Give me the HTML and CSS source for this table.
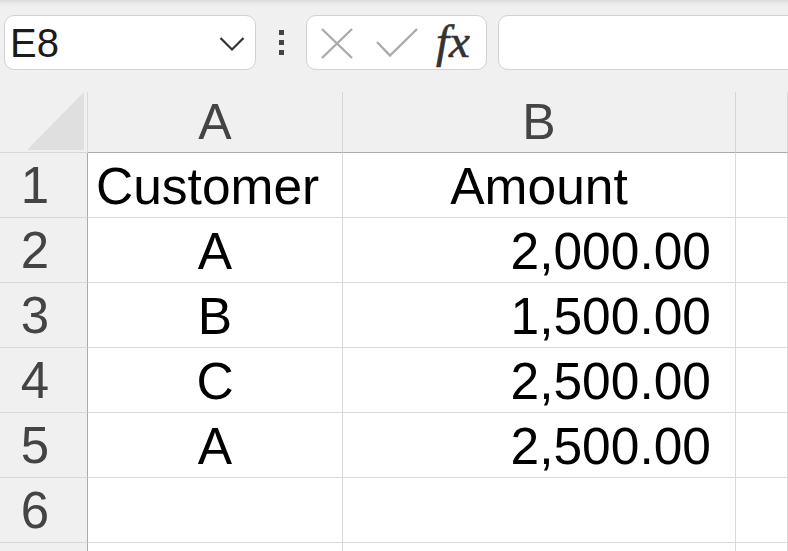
FILE: index.html
```html
<!DOCTYPE html>
<html>
<head>
<meta charset="utf-8">
<link rel="stylesheet" href="styles.css">
</head>
<body>
<div class="app">
  <div class="toolbar">
    <div class="namebox">
      <span class="cellref">E8</span>
      <svg class="chev" width="26" height="16" viewBox="0 0 26 16"><polyline points="1.5,2 13,13.5 24.5,2" fill="none" stroke="#333" stroke-width="2.2"/></svg>
    </div>
    <div class="dots"><span></span><span></span><span></span></div>
    <div class="fxbox">
      <svg class="ico-x" width="32" height="31" viewBox="0 0 32 31"><path d="M1 1 L31 30 M31 1 L1 30" stroke="#ababab" stroke-width="2.4" fill="none"/></svg>
      <svg class="ico-check" width="42" height="30" viewBox="0 0 42 30"><polyline points="1,14 14,27.5 41,1" fill="none" stroke="#ababab" stroke-width="2.4"/></svg>
      <span class="fx">fx</span>
    </div>
    <div class="formula"></div>
  </div>
  <div class="grid">
    <div class="corner"><svg width="57" height="58" viewBox="0 0 57 58"><polygon points="0,58 57,58 57,0" fill="#dfdfdf"/></svg></div>
    <div class="colhead">A</div>
    <div class="colhead">B</div>
    <div class="colhead"></div>

    <div class="rowhead">1</div>
    <div class="cell left">Customer</div>
    <div class="cell center">Amount</div>
    <div class="cell"></div>

    <div class="rowhead">2</div>
    <div class="cell center">A</div>
    <div class="cell num">2,000.00</div>
    <div class="cell"></div>

    <div class="rowhead">3</div>
    <div class="cell center">B</div>
    <div class="cell num">1,500.00</div>
    <div class="cell"></div>

    <div class="rowhead">4</div>
    <div class="cell center">C</div>
    <div class="cell num">2,500.00</div>
    <div class="cell"></div>

    <div class="rowhead">5</div>
    <div class="cell center">A</div>
    <div class="cell num">2,500.00</div>
    <div class="cell"></div>

    <div class="rowhead">6</div>
    <div class="cell"></div>
    <div class="cell"></div>
    <div class="cell"></div>

    <div class="rowhead"></div>
    <div class="cell"></div>
    <div class="cell"></div>
    <div class="cell"></div>
  </div>
</div>
</body>
</html>
```
FILE: styles.css
```css
* { box-sizing: border-box; }
html, body { margin: 0; padding: 0; }
body {
  background: #f0f0f0;
  width: 788px;
  height: 551px;
  overflow: hidden;
  font-family: "Liberation Sans", Arial, sans-serif;
}
.app { width: 788px; height: 551px; overflow: hidden; }

.toolbar {
  height: 92px;
  padding: 15px 0 22px 4px;
  display: flex;
  align-items: stretch;
  background: linear-gradient(#dcdcdc 0px, #ececec 4px, #f0f0f0 8px);
}
.namebox {
  width: 252px;
  height: 55px;
  background: #fff;
  border: 1px solid #d2d2d2;
  border-radius: 10px;
  display: flex;
  align-items: center;
  justify-content: space-between;
  padding: 0 10px 0 5px;
}
.cellref {
  font-size: 40px;
  color: #1b1b1b;
  line-height: 1;
  padding-top: 1px;
}
.chev { display: block; margin-top: 2px; }
.dots {
  width: 50px;
  display: flex;
  flex-direction: column;
  align-items: center;
  justify-content: center;
  gap: 5px;
  padding-left: 1px;
}
.dots span {
  width: 5px;
  height: 5px;
  background: #444;
  display: block;
}
.fxbox {
  width: 181px;
  height: 55px;
  background: #fff;
  border: 1px solid #d2d2d2;
  border-radius: 10px;
  display: flex;
  align-items: center;
  padding-left: 14px;
}
.ico-x { display: block; margin-top: 1px; }
.ico-check { display: block; margin-left: 23px; margin-top: 1px; }
.fx {
  font-family: "Liberation Serif", "Times New Roman", serif;
  font-style: italic;
  font-size: 47px;
  color: #333;
  margin-left: 18px;
  line-height: 1;
  margin-top: -2px;
  -webkit-text-stroke: 0.6px #333;
}
.formula {
  flex: 1;
  height: 55px;
  margin-left: 11px;
  margin-right: -20px;
  background: #fff;
  border: 1px solid #d2d2d2;
  border-radius: 10px;
}

.grid {
  display: grid;
  grid-template-columns: 88px 255px 393px 1fr;
  grid-template-rows: 61px repeat(7, 65px);
}
.corner {
  border-right: 1px solid #dadada;
  border-bottom: 1px solid #d8d8d8;
  display: flex;
  align-items: flex-end;
  justify-content: flex-end;
  padding: 0 3px 2px 0;
}
.corner svg { display: block; }
.colhead {
  border-right: 1px solid #d6d6d6;
  border-bottom: 1px solid #ababab;
  text-align: center;
  font-size: 50px;
  line-height: 60px;
  color: #444;
}
.rowhead {
  border-right: 1px solid #ababab;
  border-bottom: 1px solid #d8d8d8;
  text-align: center;
  padding: 2px 17px 0 0;
  font-size: 51px;
  line-height: 62px;
  color: #444;
}
.cell {
  background: #fff;
  border-right: 1px solid #dadada;
  border-bottom: 1px solid #dadada;
  font-size: 51.5px;
  line-height: 62px;
  padding-top: 2px;
  color: #000;
  white-space: nowrap;
}
.left { text-align: left; padding-left: 8px; }
.center { text-align: center; }
.num { text-align: right; padding-right: 24px; }
```
